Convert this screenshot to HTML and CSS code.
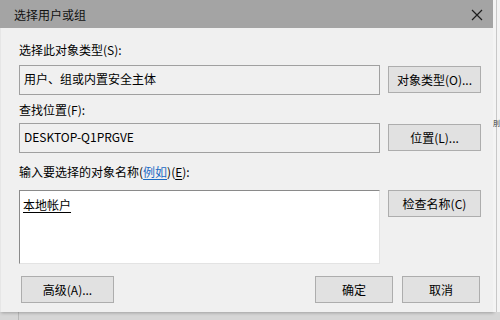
FILE: index.html
```html
<!DOCTYPE html>
<html lang="zh-CN">
<head>
    <meta charset="UTF-8">
    <title>选择用户或组</title>
    <link rel="stylesheet" href="styles.css">
</head>
<body>
    <div class="desktop">
        <div class="dialog">
            <div class="titlebar">
                <span class="title">选择用户或组</span>
                <svg class="close" width="12" height="12" viewBox="0 0 12 12">
                    <path d="M1 1 L11 11 M11 1 L1 11" stroke="#1e1e1e" stroke-width="1.2" fill="none"/>
                </svg>
            </div>
            <div class="body">
                <div class="label label-type">选择此对象类型(S):</div>
                <div class="row row-type">
                    <div class="field">用户、组或内置安全主体</div>
                    <button class="btn">对象类型(O)...</button>
                </div>
                <div class="label label-where">查找位置(F):</div>
                <div class="row row-where">
                    <div class="field">DESKTOP-Q1PRGVE</div>
                    <button class="btn">位置(L)...</button>
                </div>
                <div class="label label-names">输入要选择的对象名称(<a href="#" class="link">例如</a>)(<u>E</u>):</div>
                <div class="row row-names">
                    <div class="names"><u>本地帐户</u></div>
                    <button class="btn">检查名称(C)</button>
                </div>
                <div class="footer">
                    <button class="btn btn-adv">高级(A)...</button>
                    <div class="spacer"></div>
                    <button class="btn btn-small">确定</button>
                    <button class="btn btn-small">取消</button>
                </div>
                <div class="grip"></div>
            </div>
        </div>
        <div class="side">
            <div class="side-line"></div>
            <span class="side-text">刖</span>
        </div>
    </div>
</body>
</html>
```

FILE: styles.css
```css
* {
    box-sizing: border-box;
}
body {
    margin: 0;
    width: 500px;
    height: 320px;
    overflow: hidden;
    font-family: "Noto Sans CJK SC", "Noto Sans", sans-serif;
    font-size: 12px;
    color: #000;
    background: #d6d6d6;
}
.desktop {
    display: flex;
    height: 320px;
    background: linear-gradient(to right, transparent 18px, #b8b8b8 18px, #b8b8b8 19px, transparent 19px);
}
.dialog {
    width: 493px;
    height: 312px;
    display: flex;
    flex-direction: column;
    background: #f0f0f0;
    box-shadow: 1px 1px 3px rgba(0, 0, 0, 0.25);
}
.titlebar {
    height: 28px;
    background: #a4a4a4;
    display: flex;
    align-items: center;
    justify-content: space-between;
    padding: 1px 10px 0 14px;
}
.title {
    font-size: 12px;
    color: #111;
}
.body {
    flex-grow: 1;
    position: relative;
    padding: 14px 13px 0 18px;
    border-left: 1px solid #e6e6e6;
}
.label {
    line-height: 16px;
    height: 16px;
}
.label-type {
    margin-bottom: 7px;
}
.label-where {
    margin-top: 7px;
    margin-bottom: 5px;
}
.label-names {
    margin-top: 11px;
    margin-bottom: 10px;
}
.row {
    display: grid;
    grid-template-columns: 361px 93px;
    column-gap: 8px;
    align-items: start;
}
.field {
    height: 30px;
    border: 1px solid #a0a0a0;
    background: #f0f0f0;
    padding: 0 4px;
    line-height: 26px;
}
.btn {
    height: 27px;
    border: 1px solid #adadad;
    background: #e1e1e1;
    font-family: inherit;
    font-size: 12px;
    color: #000;
    padding: 0;
}
.row-type .btn, .row-where .btn {
    margin-top: 1px;
}
.names {
    height: 74px;
    background: #fff;
    border-top: 1px solid #8a8a8a;
    border-left: 1px solid #8a8a8a;
    border-right: 1px solid #e3e3e3;
    border-bottom: 1px solid #e3e3e3;
    padding: 6px 3px;
    line-height: 16px;
}
.names u, .label u {
    text-underline-offset: 2px;
}
.link {
    color: #1a6bc4;
    text-underline-offset: 2px;
}
.footer {
    display: flex;
    margin-top: 12px;
    gap: 9px;
}
.btn-adv {
    width: 93px;
    margin-left: 2px;
}
.spacer {
    flex-grow: 1;
}
.btn-small {
    width: 78px;
}
.grip {
    position: absolute;
    right: 3px;
    bottom: 3px;
    width: 6px;
    height: 6px;
    background: radial-gradient(circle, #b5b5b5 40%, transparent 45%) 0 0 / 2px 2px;
}
.side {
    flex-grow: 1;
    height: 312px;
    background: #f4f4f4;
    position: relative;
    overflow: hidden;
}
.side-line {
    position: absolute;
    left: 3px;
    top: 0;
    bottom: 0;
    width: 1px;
    background: #c8c8c8;
}
.side-text {
    position: absolute;
    left: 0;
    top: 119px;
    font-size: 7px;
    line-height: 8px;
    color: #333;
}
```
